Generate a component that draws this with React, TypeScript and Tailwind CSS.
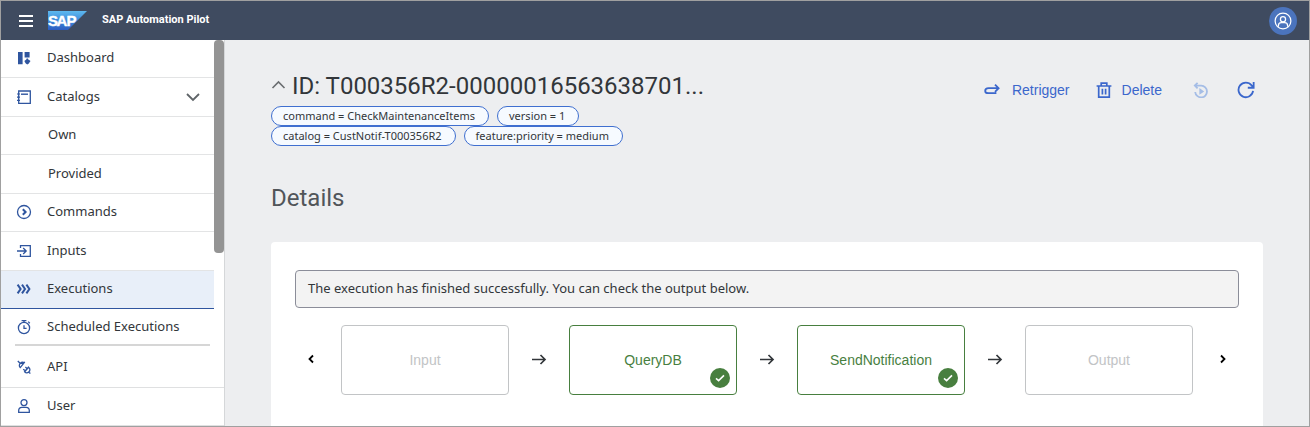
import type { ReactNode } from "react";

type IconProps = { className?: string; children: ReactNode };

function Icon({ className = "size-4", children }: IconProps) {
  return (
    <svg
      viewBox="0 0 16 16"
      className={`${className} shrink-0`}
      fill="none"
      stroke="currentColor"
      strokeWidth="1.3"
      aria-hidden="true"
    >
      {children}
    </svg>
  );
}

const dashboardIcon = (
  <Icon>
    <g fill="currentColor" stroke="none">
      <path d="M2 2h4.6v12.2H2zM8.6 2h5v5.4h-5z" />
      <path d="M10.6 8.4h1.4l.2 1.2 1.3.6 1 .9-.9 1.1-.8 1.4-1.5.8-1.5-.8-.8-1.4-.6-1.1.9-.9 1-.6z" />
    </g>
  </Icon>
);

const catalogIcon = (
  <Icon>
    <path d="M2.7 2h11.6v12.4H2.7z" />
    <path d="M5 5.2h7" strokeWidth="1.4" />
    <path d="M1 5h3M1 8.2h3M1 11.4h3" strokeWidth="1.2" />
  </Icon>
);

const commandIcon = (
  <Icon>
    <circle cx="8" cy="8" r="6.5" />
    <path d="M6.8 5.2 9.6 8l-2.8 2.8" strokeWidth="2" />
  </Icon>
);

const inputIcon = (
  <Icon>
    <path d="M4.5 5V2.6h9.8v10.8H4.5V11" />
    <path d="M1 8h9M7.2 5l3 3-3 3" />
  </Icon>
);

const executionIcon = (
  <Icon>
    <path d="m1.6 3.6 3 4.4-3 4.4M6 3.6 9 8l-3 4.4M10.4 3.6l3 4.4-3 4.4" strokeWidth="2" />
  </Icon>
);

const scheduleIcon = (
  <Icon>
    <circle cx="8" cy="9" r="5.6" />
    <path d="M5.6 1.6h4.8M8 1.6v2M12.2 2.6l1.6 1.6M8 6.2v3.2h2.6" />
  </Icon>
);

const apiIcon = (
  <Icon>
    <path d="m1.800 2 2 2M3.600 4.400h4M4.400 4.200a3 3 0 0 1 3.800-.6L4.200 8.600a3 3 0 0 1 .2-4.400zM7.600 4.200l1.200-1.400" />
    <path d="m14.400 14.600-1.600-1.400M8.200 13.200l4.600-5.600M8.600 12.800a3 3 0 0 0 4.200.2 3 3 0 0 0-.2-4.800zM7.200 10.200l1.800 1.400M9.400 8l1.600 1.400" />
  </Icon>
);

const userIcon = (
  <Icon>
    <circle cx="8" cy="4.600" r="3" />
    <path d="M2.700 14.400v-1.800c0-2 1.400-3.200 3.200-3.200h4.200c1.800 0 3.200 1.200 3.200 3.200v1.800z" />
  </Icon>
);

type NavEntry = { label: string; icon?: ReactNode; active?: boolean; expandable?: boolean };

const mainEntries: NavEntry[] = [
  { label: "Dashboard", icon: dashboardIcon },
  { label: "Catalogs", icon: catalogIcon, expandable: true },
  { label: "Own" },
  { label: "Provided" },
  { label: "Commands", icon: commandIcon },
  { label: "Inputs", icon: inputIcon },
  { label: "Executions", icon: executionIcon, active: true },
];

function NavLink({ label, icon, active, expandable }: NavEntry) {
  return (
    <a
      href="#"
      aria-current={active ? "page" : undefined}
      className={`flex h-full items-center pb-px text-[13px] ${icon ? "gap-[15px] pl-[15px]" : "pl-[47px]"} pr-3`}
    >
      {icon && <span className="text-[#2f559f]">{icon}</span>}
      <span className="flex-1">{label}</span>
      {expandable && (
        <svg viewBox="0 0 18 18" className="size-[18px] text-[#5f6468]" fill="none" stroke="currentColor" strokeWidth="1.8" aria-hidden="true">
          <path d="m3 6 6 6 6-6" />
        </svg>
      )}
    </a>
  );
}

function Sidebar() {
  return (
    <aside className="flex w-[224px] shrink-0 flex-col border-r border-[#d5d7d9] bg-white">
      <div className="flex">
        <nav aria-label="Main" className="flex-1">
          <ul>
            {mainEntries.map((entry) => (
              <li
                key={entry.label}
                className={`h-[38px] border-b even:h-[39px] ${
                  entry.active ? "border-[#2f559f] bg-[#e8eff9]" : "border-[#e3e4e5]"
                }`}
              >
                <NavLink {...entry} />
              </li>
            ))}
            <li className="h-[35px] pt-[2px]">
              <NavLink label="Scheduled Executions" icon={scheduleIcon} />
            </li>
          </ul>
          <hr className="mr-1 ml-[14px] border-t-2 border-[#d6d6d6]" />
        </nav>
        <div className="w-[10px]">
          <div className="h-[213px] rounded-[4px] bg-[#949494]" />
        </div>
      </div>
      <nav aria-label="Secondary">
        <ul>
          <li className="h-[42px] border-b border-[#dfe0e1] pt-[2px]">
            <NavLink label="API" icon={apiIcon} />
          </li>
          <li className="h-[38px] border-b border-[#dfe0e1]">
            <NavLink label="User" icon={userIcon} />
          </li>
        </ul>
      </nav>
    </aside>
  );
}

function SapLogo() {
  return (
    <svg viewBox="0 0 40 20" className="h-5 w-10" role="img" aria-label="SAP">
      <defs>
        <linearGradient id="sap-blue" x1="0" y1="0" x2="0" y2="1">
          <stop offset="0" stopColor="#5db9ef" />
          <stop offset="0.5" stopColor="#3f8bdb" />
          <stop offset="1" stopColor="#2c5cc0" />
        </linearGradient>
      </defs>
      <path d="M0 0h39L20 19H0z" fill="url(#sap-blue)" />
      <text x="0 8.5 18.500" y="15" fontFamily="Liberation Sans, sans-serif" fontWeight="700" fontSize="15" fill="#fff" stroke="#fff" strokeWidth="0.4">
        SAP
      </text>
    </svg>
  );
}

function TopBar() {
  return (
    <header className="flex h-[39px] items-center bg-[#3f4b60] pr-3 pl-[18px] text-white">
      <button type="button" aria-label="Menu" className="mr-[15px]">
        <svg viewBox="0 0 14 12" className="h-3 w-[14px]" stroke="currentColor" strokeWidth="2" aria-hidden="true">
          <path d="M0 1h14M0 6h14M0 11h14" />
        </svg>
      </button>
      <SapLogo />
      <span className="ml-[14px] font-['Roboto',sans-serif] text-[11px] font-bold">SAP Automation Pilot</span>
      <button type="button" aria-label="Profile" className="ml-auto grid size-7 place-items-center rounded-full bg-[#4b74bd]">
        <Icon className="size-[18px]">
          <g strokeWidth="1.1">
            <circle cx="8" cy="8" r="7" />
            <circle cx="8" cy="6.400" r="2.300" />
            <path d="M3.900 13.200v-1c0-1.700 1-2.700 2.600-2.700h3c1.600 0 2.600 1 2.600 2.700v1" />
          </g>
        </Icon>
      </button>
    </header>
  );
}

function Tag({ children }: { children: ReactNode }) {
  return (
    <li className="flex h-5 items-center rounded-full border border-[#3f6fd0] bg-[#f6faff] pr-[13px] pl-[11px] text-[11px]">
      {children}
    </li>
  );
}

function Toolbar() {
  return (
    <div className="flex items-center pr-2 font-['Liberation_Sans',sans-serif] text-sm text-[#3b67cc]">
      <button type="button" className="flex items-center gap-3">
        <Icon>
          <path d="M12.400 11.200H4.600C2.600 11.200 1.200 10.400 1.200 8.900S2.600 6.200 4.600 6.200h9.800M11 2.600l3.600 3.600L11 9.800" strokeWidth="1.800" />
        </Icon>
        Retrigger
      </button>
      <button type="button" className="ml-[26px] flex items-center gap-[10px]">
        <Icon className="size-4">
          <path d="M.6 4h14.800M5.200 3.600V1.200h5.600v2.400M2.700 4v11.200h10.600V4M6.400 6.800v5.600M9.600 6.800v5.600" strokeWidth="1.700" />
        </Icon>
        Delete
      </button>
      <button type="button" disabled aria-label="Resume" className="ml-[31px] text-[#a5bde6]">
        <Icon>
          <path d="M1.600 3.600H8.200a5.900 5.900 0 1 1-6 6.400M4.600.8 1.800 3.600l2.800 2.800" strokeWidth="1.800" />
          <path d="m6.400 6 4.800 3.400-4.800 3.400z" fill="currentColor" stroke="none" />
        </Icon>
      </button>
      <button type="button" aria-label="Refresh" className="ml-7">
        <Icon className="size-[18px]">
          <path d="M14.300 8.800a6.500 6.500 0 1 1-1.300-4.900l1.600 1.900M14.800.8v5.200H9.600" strokeWidth="1.600" />
        </Icon>
      </button>
    </div>
  );
}

function Arrow() {
  return (
    <span className="flex w-[60px] shrink-0 justify-center text-[#32363a]">
      <Icon>
        <path d="M1 7.500h13M9.500 3l4.500 4.500L9.500 12" strokeWidth="1.700" />
      </Icon>
    </span>
  );
}

function Step({ label, done }: { label: string; done?: boolean }) {
  return (
    <div
      className={`relative flex h-[70px] flex-1 items-center justify-center rounded border bg-white ${
        done ? "border-[#487f3f] text-[#487f3f]" : "border-[#c2c4c6] text-[#c2c4c6]"
      }`}
    >
      {label}
      {done && (
        <span className="absolute right-[6px] bottom-[6px] grid size-5 place-items-center rounded-full bg-[#487f3f] text-white">
          <svg viewBox="0 0 12 12" className="size-3" fill="none" stroke="currentColor" strokeWidth="1.600" aria-label="Finished" role="img">
            <path d="m2 6.400 2.600 2.200L10 3.400" />
          </svg>
        </span>
      )}
    </div>
  );
}

function Pager({ label, path, align }: { label: string; path: string; align: string }) {
  return (
    <button type="button" aria-label={label} className={`flex w-[46px] shrink-0 items-center px-3 pb-[2px] text-black ${align}`}>
      <svg viewBox="0 0 8 10" className="h-[10px] w-2" fill="none" stroke="currentColor" strokeWidth="1.800" aria-hidden="true">
        <path d={path} />
      </svg>
    </button>
  );
}

export default function App() {
  return (
    <div className="flex h-screen flex-col overflow-hidden border border-[#a0a0a0] bg-[#edeef0] font-['Noto_Sans',sans-serif] text-[#32363a]">
      <TopBar />
      <div className="flex min-h-0 flex-1">
        <Sidebar />
        <main className="flex min-w-0 flex-1 flex-col px-[46px] pt-[30px]">
          <div className="flex items-start justify-between">
            <div className="max-w-[440px]">
              <div className="flex h-8 items-center gap-[6px]">
                <button type="button" aria-label="Collapse header" className="text-[#6a6d70]">
                  <svg viewBox="0 0 15 12" className="h-3 w-[15px]" fill="none" stroke="currentColor" strokeWidth="1.600" aria-hidden="true">
                    <path d="m1.500 8 6-6 6 6" />
                  </svg>
                </button>
                <h1 className="font-['Roboto',sans-serif] text-2xl whitespace-nowrap">ID: T000356R2-00000016563638701...</h1>
              </div>
              <ul className="mt-1 flex flex-wrap gap-x-2">
                <Tag>command = CheckMaintenanceItems</Tag>
                <Tag>version = 1</Tag>
                <Tag>catalog = CustNotif-T000356R2</Tag>
                <Tag>feature:priority = medium</Tag>
              </ul>
            </div>
            <div className="flex h-10 items-center">
              <Toolbar />
            </div>
          </div>
          <h2 className="mt-9 font-['Roboto',sans-serif] text-2xl text-[#515559]">Details</h2>
          <section className="mt-7 flex-1 rounded-t bg-white px-6 pt-7">
            <p className="flex h-[38px] items-center rounded border border-[#8b8d99] bg-[#f3f3f3] px-3 text-[13px]">
              The execution has finished successfully. You can check the output below.
            </p>
            <div className="mt-[17px] flex items-center font-['Liberation_Sans',sans-serif] text-sm">
              <Pager label="Previous" path="M6 1.500 2.500 5 6 8.500" align="justify-start" />
              <Step label="Input" />
              <Arrow />
              <Step label="QueryDB" done />
              <Arrow />
              <Step label="SendNotification" done />
              <Arrow />
              <Step label="Output" />
              <Pager label="Next" path="M2 1.500 5.500 5 2 8.500" align="justify-end" />
            </div>
          </section>
        </main>
      </div>
    </div>
  );
}
